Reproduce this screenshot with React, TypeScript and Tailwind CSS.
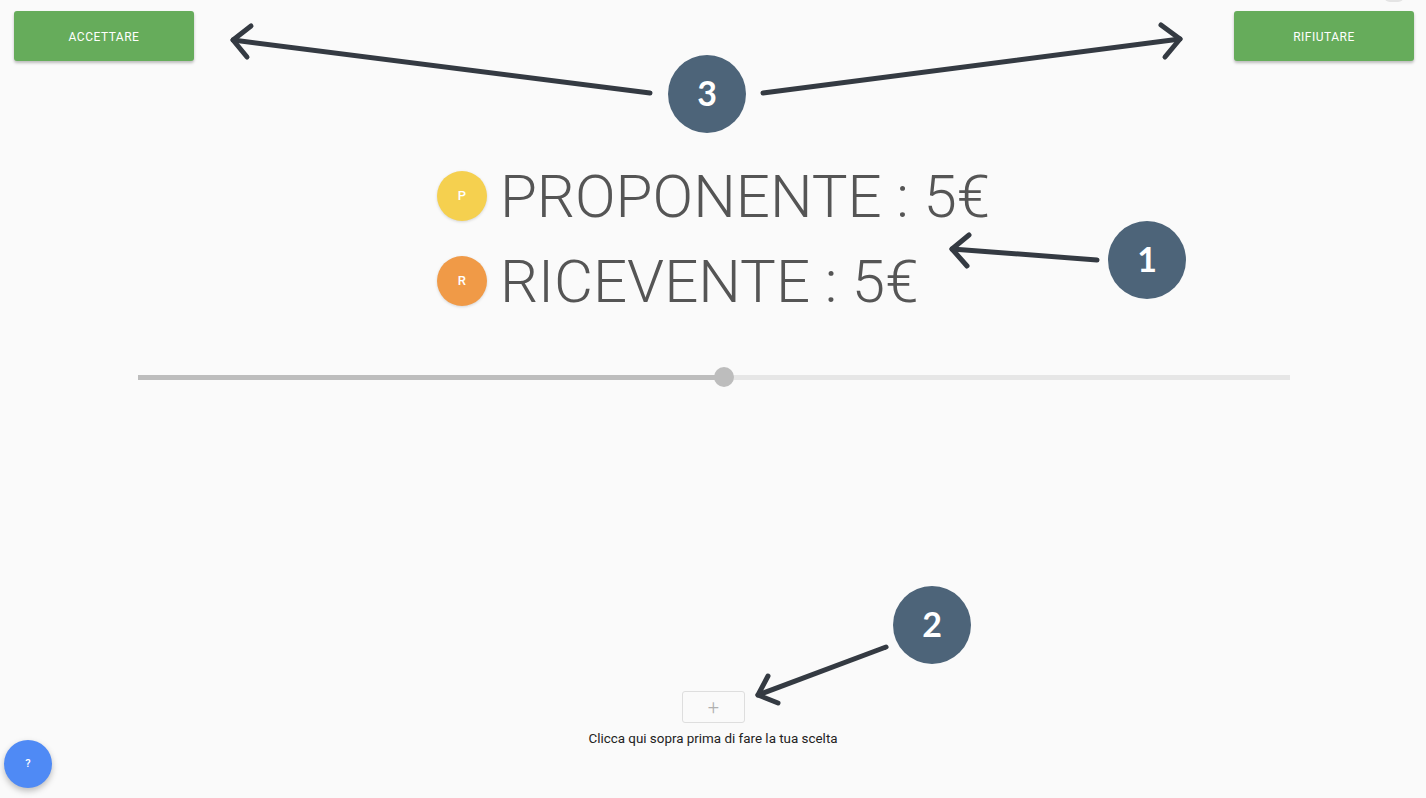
import React from "react";

function Annotations() {
  const stroke = "#343a42";
  const fill = "#4d6479";
  const num = (cx: number, cy: number, t: string) => (
    <g>
      <circle cx={cx} cy={cy} r={39} fill={fill} />
      <text
        x={cx}
        y={cy + 12}
        textAnchor="middle"
        fill="#fff"
        fontSize="34"
        fontWeight="700"
        fontFamily="Lato, 'Open Sans', sans-serif"
      >
        {t}
      </text>
    </g>
  );
  return (
    <svg
      className="absolute inset-0 pointer-events-none"
      width="1426"
      height="798"
      viewBox="0 0 1426 798"
    >
      <g stroke={stroke} strokeWidth="5" strokeLinecap="round" strokeLinejoin="round" fill="none">
        <path d="M650 93 L233 40" />
        <path d="M251 26 L233 40 L247 57" />
        <path d="M763 93 L1180 39" />
        <path d="M1161 25 L1180 39 L1165 57" />
        <path d="M1097 260 L952 249" />
        <path d="M969 235 L952 249 L967 266" />
        <path d="M886 647 L758 695" />
        <path d="M768 676 L758 695 L778 703" />
      </g>
      {num(707, 94, "3")}
      {num(1147, 260, "1")}
      {num(932, 625, "2")}
    </svg>
  );
}

function Row({ letter, color, label }: { letter: string; color: string; label: string }) {
  return (
    <div className="flex items-center h-[85px]">
      <div
        className={`w-[50px] h-[50px] rounded-full flex items-center justify-center text-white text-[13px] font-medium shadow-[0_1px_3px_rgba(0,0,0,0.15)] ${color}`}
      >
        {letter}
      </div>
      <div className="ml-[13px] pt-[3px] text-[60px] leading-none font-light text-[#555555] whitespace-nowrap">
        {label}
      </div>
    </div>
  );
}

export default function App() {
  return (
    <div
      className="relative w-[1426px] h-[798px] overflow-hidden bg-[#fafafa]"
      style={{ fontFamily: "Roboto, 'Liberation Sans', sans-serif" }}
    >
      <div className="absolute left-[1384px] top-[-10px] w-[20px] h-[12px] rounded-full bg-[#e4e4e4]" />
      <div className="flex justify-between pl-[14px] pr-[12px] pt-[11px]">
        <button className="w-[180px] h-[50px] pt-[2px] rounded-[3px] bg-[#66ac5b] text-white text-[12px] font-normal tracking-[0.5px] shadow-[0_2px_3px_rgba(0,0,0,0.25)]">
          ACCETTARE
        </button>
        <button className="w-[180px] h-[50px] pt-[2px] rounded-[3px] bg-[#66ac5b] text-white text-[12px] font-normal tracking-[0.5px] shadow-[0_2px_3px_rgba(0,0,0,0.25)]">
          RIFIUTARE
        </button>
      </div>

      <div className="flex justify-center mt-[92px]">
        <div className="flex flex-col pl-[1px]">
          <Row letter="P" color="bg-[#f5d04f]" label="PROPONENTE : 5€" />
          <Row letter="R" color="bg-[#f09a47]" label="RICEVENTE : 5€" />
        </div>
      </div>

      <div className="mt-[44px] ml-[138px] w-[1152px] h-[20px] relative flex items-center">
        <div className="w-full h-[5px] bg-[#e6e6e6] flex">
          <div className="h-full w-[586px] bg-[#bdbdbd]" />
        </div>
        <div className="absolute left-[576px] top-0 w-[20px] h-[20px] rounded-full bg-[#bdbdbd]" />
      </div>

      <div className="mt-[304px] flex flex-col items-center">
        <div className="ml-[1px] w-[63px] h-[32px] border border-[#dedede] rounded-[3px] bg-[#fafafa] flex items-center justify-center text-[#b0b0b0] text-[20px] font-light leading-none">
          +
        </div>
        <div className="mt-[8px] text-[13.4px] leading-[16px] text-[#222]">
          Clicca qui sopra prima di fare la tua scelta
        </div>
      </div>

      <div className="absolute left-[4px] top-[740px] w-[48px] h-[48px] rounded-full bg-[#4f8af5] flex items-center justify-center text-white text-[11px] font-medium shadow-[0_3px_6px_rgba(0,0,0,0.25)]">
        ?
      </div>

      <Annotations />
    </div>
  );
}
